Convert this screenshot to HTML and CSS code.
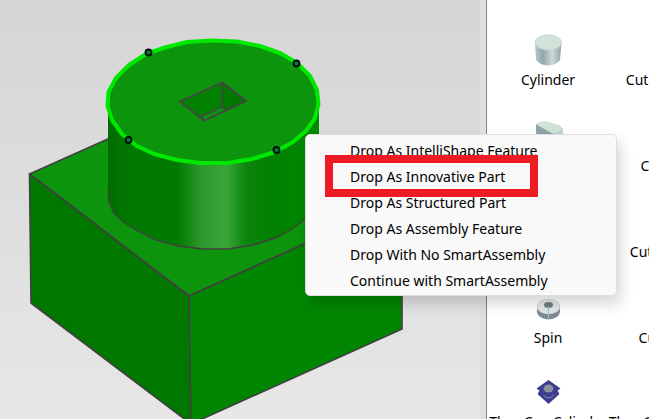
FILE: index.html
```html
<!DOCTYPE html>
<html lang="en">
<head>
<meta charset="utf-8">
<title>Drop options</title>
<link rel="stylesheet" href="styles.css">
</head>
<body>
<main class="app">
  <section class="viewport" aria-label="3D scene">
    <svg class="model" width="486" height="419" viewBox="0 0 486 419" role="img" aria-label="Green cylinder on a block">
      <defs>
        <linearGradient id="side" gradientUnits="userSpaceOnUse" x1="108" y1="0" x2="319" y2="0">
          <stop offset="0" stop-color="#006c00"/>
          <stop offset=".1" stop-color="#007a00"/>
          <stop offset=".33" stop-color="#007a00"/>
          <stop offset=".43" stop-color="#2a952a"/>
          <stop offset=".56" stop-color="#3aa63a"/>
          <stop offset=".65" stop-color="#0c860c"/>
          <stop offset=".76" stop-color="#008000"/>
          <stop offset="1" stop-color="#008a00"/>
        </linearGradient>
      </defs>
      <g stroke="#404040" stroke-width="1.6" stroke-linejoin="round">
        <path fill="#0c940c" d="M29.500 174L240 80L402 200L189 296Z"/>
        <path fill="#007800" d="M29.500 174L189 296L191 424L31 303Z"/>
        <path fill="#008600" d="M189 296L402 200V329L191 424Z"/>
      </g>
      <path fill="url(#side)" d="M108 105V191L109 202L114 213L122 221L136 230L156 240L178 246L203 249H228L253 245L275 238L292 229L306 218L315 207L319 195V105Z"/>
      <path fill="none" stroke="#404040" stroke-width="1.400" d="M108 190L109 202L114 213L122 221L136 230L156 240L178 246L203 249H228L253 245L275 238L292 229L306 218"/>
      <path fill="#0c940c" stroke="#00e800" stroke-width="4" stroke-linejoin="round" d="M211 40.500L237 41.500L260 46L281 53.500L297 63L310 76L317 90L318.500 104L315 118L306 131L292 142.500L275 152L252 159L227 163H200L177 160L154 154L136 145.500L122 134L112 120L107.500 106L108.500 92L116 78L129 65L146 54L165 47.500L187 42Z"/>
      <g stroke="#454545" stroke-width="1.700" stroke-linejoin="round">
        <path fill="#008200" d="M180 101.500L222 82.500L246 101L204 120.500Z"/>
        <path fill="#007800" d="M222 82.500L246 101L227 110L222 107Z"/>
        <path fill="#0c940c" d="M222 107L201 116.500L204 120.500L227 110Z"/>
      </g>
      <g fill="#087848" stroke="#001000" stroke-width="1.800">
        <circle cx="148.500" cy="52.500" r="3"/><circle cx="296.500" cy="63.500" r="3"/>
        <circle cx="128.500" cy="140" r="3"/><circle cx="276.500" cy="150" r="3"/>
      </g>
    </svg>
  </section>
  <aside class="catalog">
    <button class="item"><svg class="icon" viewBox="0 0 40 40" aria-hidden="true">
      <defs><linearGradient id="steel"><stop offset="0" stop-color="#b8c8c8"/><stop offset=".3" stop-color="#93a6a9"/><stop offset=".65" stop-color="#cddbd9"/><stop offset="1" stop-color="#90a3a4"/></linearGradient></defs>
      <path fill="url(#steel)" d="M7 12L8 30Q12 35 20 35.500Q28 35 32 30L33.500 12Z"/><ellipse cx="20.300" cy="12.500" rx="13.200" ry="7.700" fill="#d2e3d9" stroke="#b9cdc6" stroke-width=".6"/></svg><span>Cylinder</span></button>
    <button class="item"><span class="icon"></span><span>Cut Cylinder</span></button>
    <button class="item"><svg class="icon" viewBox="0 0 40 40" aria-hidden="true"><path fill="#8fa4a4" d="M8 8L24 17L34.500 12V36H20L8 30Z"/><path fill="#c3d0d0" d="M25 16L34.500 12V36H25Z"/><path fill="#cfe2d6" d="M8 8Q13 4 21 6L32 9.500Q37 13 32 15Q26 18 19 14.500Z"/></svg><span>Slot</span></button>
    <button class="item"><span class="icon"></span><span>Cut Slot</span></button>
    <button class="item"><span class="icon"></span><span>Sphere</span></button>
    <button class="item"><span class="icon"></span><span>Cut Sphere</span></button>
    <button class="item"><svg class="icon" viewBox="0 0 40 40" aria-hidden="true"><path fill="#808a92" d="M9 17V24Q10 30.500 20.500 31.500Q31 30.500 32 24V17Z"/><ellipse cx="20.500" cy="18.500" rx="11.500" ry="7.500" fill="#e4e7e7" stroke="#ccd3d3" stroke-width=".5"/><ellipse cx="20.500" cy="17" rx="4.500" ry="3" fill="#707b84"/><path stroke="#8cc4cf" d="M20.500 18V31"/></svg><span>Spin</span></button>
    <button class="item"><span class="icon"></span><span>Cut Spin</span></button>
    <button class="item"><svg class="icon" viewBox="0 0 40 40" aria-hidden="true"><path fill="#3c3c91" d="M20.500 8L32.500 16.500L29.500 18.500L31.500 22L20.500 32L9.500 22L11.500 18.500L8.500 16.500Z"/><ellipse cx="20.500" cy="16.500" rx="5" ry="4" fill="#88929a"/><path fill="none" stroke="#8d93a0" d="M15.500 23Q20.500 29 25.500 23"/></svg><span>Thru Cap Cylinder</span></button>
    <button class="item"><span class="icon"></span><span>Thru Cap Extrude</span></button>
  </aside>
</main>
<menu class="context-menu">
  <li><button>Drop As IntelliShape Feature</button></li>
  <li class="marked"><button>Drop As Innovative Part</button></li>
  <li><button>Drop As Structured Part</button></li>
  <li><button>Drop As Assembly Feature</button></li>
  <li><button>Drop With No SmartAssembly</button></li>
  <li><button>Continue with SmartAssembly</button></li>
</menu>
</body>
</html>
```
FILE: styles.css
```css
*, *::after { box-sizing: border-box; }
body {
  margin: 0;
  overflow: hidden;
  font: 14px/20px "Noto Sans", "Open Sans", sans-serif;
  color: #000;
}
button {
  border: 0;
  padding: 0;
  background: none;
  font: inherit;
  color: inherit;
}
.app { display: flex; height: 100vh; }
.viewport {
  flex: 1;
  min-width: 0;
  overflow: hidden;
  background: linear-gradient(#d5d5d5, #e7e7e7);
  border-right: 6px solid #e0e0e0;
}
.model { display: block; }
.catalog {
  flex: 0 0 163px;
  display: grid;
  grid-template-columns: repeat(2, 118px);
  grid-template-rows: repeat(3, 86px) 84px 86px;
  align-content: start;
  padding: 16px 0 0 2px;
  overflow: hidden;
  background: #fff;
  border-left: 1px solid #7a7f88;
}
.item {
  display: flex;
  flex-direction: column;
  align-items: center;
  justify-content: start;
  padding-top: 14px;
  white-space: nowrap;
}
.icon { width: 40px; height: 40px; flex: none; }
.context-menu {
  position: absolute;
  left: 305px;
  top: 134px;
  width: 312px;
  margin: 0;
  padding: 3px 0 1px;
  list-style: none;
  background: #f9f9f9;
  border: 1px solid #dedede;
  border-radius: 5px;
  box-shadow: 4px 8px 14px rgb(0 0 0 / 16%);
}
.context-menu button {
  display: block;
  width: 100%;
  height: 26px;
  padding-left: 44px;
  text-align: left;
}
.marked { position: relative; }
.marked::after {
  content: "";
  position: absolute;
  left: 19px;
  top: -9px;
  width: 213px;
  height: 42px;
  border: 8px solid #ed1c24;
}
```
